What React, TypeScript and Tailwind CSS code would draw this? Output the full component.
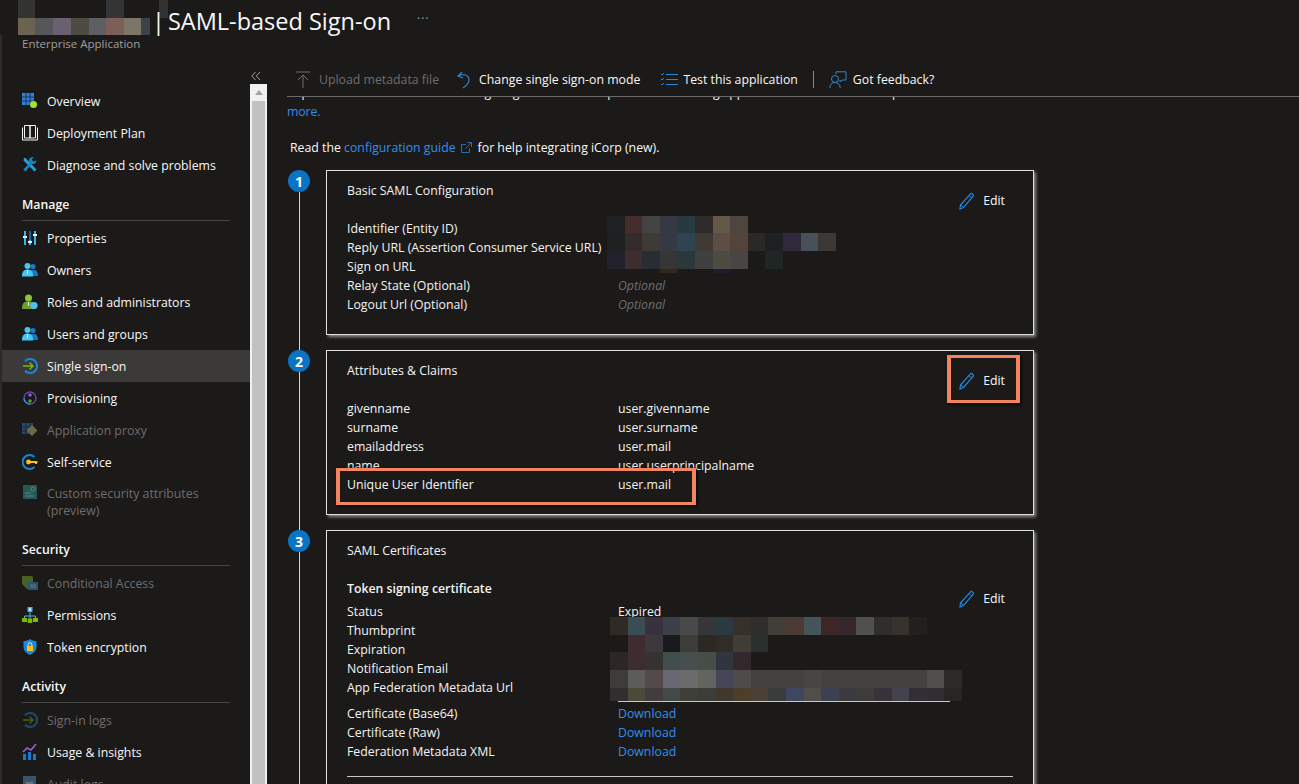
import type { ReactNode } from "react";

const dim = "opacity-45";

function Svg({ children, className }: { children: ReactNode; className?: string }) {
  return (
    <svg viewBox="0 0 16 16" className={"w-4 h-4 shrink-0 " + (className ?? "")}>
      {children}
    </svg>
  );
}

function GridIcon() {
  return (
    <Svg>
      <path d="M0 0h12v12H0z" fill="#2f80d8" />
      <path d="M4 0v12M8 0v12M0 4h12M0 8h12" stroke="#12263a" strokeWidth="0.8" />
      <circle cx="11.5" cy="11.5" r="3.5" fill="#a4e22e" />
    </Svg>
  );
}
function BookIcon() {
  return (
    <Svg>
      <path d="M.5 2.500v12.500h15V2.500" fill="none" stroke="#f4f4f4" />
      <path d="M2.500.5h5.500v12.500H2.500zM8 .5h5.500v12.500H8z" fill="#1b1a19" stroke="#f4f4f4" />
    </Svg>
  );
}
function WrenchIcon() {
  return (
    <Svg>
      <path d="M2 1l1.5 0 11 11.500-2 2L1.500 3.500z" fill="#2aa0d8" />
      <path d="M14.500 3.500a3.500 3.500 0 0 1-4.700 3.300L3.600 14.600 1.200 12.400l6.600-6.500A3.500 3.500 0 0 1 11.800.4L9.700 2.600l1.700 1.800z" fill="#1683c4" />
    </Svg>
  );
}
function SlidersIcon() {
  return (
    <Svg>
      <path d="M2 1h2v14H2zM7 1h2v14H7zM12 1h2v14h-2z" fill="#38b6ea" />
      <path d="M1 6h4v2H1zM6 11h4v2H6zM11 4h4v2h-4z" fill="#f2f2f2" />
      <path d="M7 1h2v9H7z" fill="#1c5f9c" />
    </Svg>
  );
}
function PeopleIcon() {
  return (
    <Svg>
      <circle cx="11" cy="4.500" r="2.600" fill="#1a78c8" />
      <path d="M7 14c0-5 1-6 4-6s5 1 5 6z" fill="#1a78c8" />
      <circle cx="5.500" cy="4" r="3" fill="#48c4ee" />
      <path d="M0 14.500c0-5 1.500-7 5.500-7s5.500 2 5.500 7z" fill="#48c4ee" />
      <path d="M5 8h1v4H5z" fill="#f2f2f2" />
    </Svg>
  );
}
function RoleIcon() {
  return (
    <Svg>
      <circle cx="6.500" cy="4" r="3.500" fill="#8cc63f" />
      <path d="M0 15c0-6 2-7.500 6.500-7.500S13 9 13 15z" fill="#6f9e2e" />
      <circle cx="12" cy="11.500" r="3.600" fill="#48c4ee" />
      <path d="M6 8h1v4H6z" fill="#f2f2f2" />
    </Svg>
  );
}
function SsoIcon({ className }: { className?: string }) {
  return (
    <Svg className={className}>
      <path d="M3 3.200A7 7 0 1 1 3 12.800" fill="none" stroke="#1783d4" strokeWidth="2.200" />
      <path d="M1 8h10M7.500 4.500 11 8l-3.500 3.500" fill="none" stroke="#7fba00" strokeWidth="1.400" />
    </Svg>
  );
}
function ProvisionIcon() {
  return (
    <Svg>
      <circle cx="8" cy="8" r="6" fill="none" stroke="#6a459e" strokeWidth="1.400" />
      <path d="M2 8a6 6 0 0 0 6 6" fill="none" stroke="#2a8fd8" strokeWidth="1.400" />
      <circle cx="8" cy="5" r="1.800" fill="#8a60c0" />
      <circle cx="8" cy="11" r="1.800" fill="#5aa02c" />
    </Svg>
  );
}
function ProxyIcon() {
  return (
    <Svg className={dim}>
      <path d="M0 1h11v11H0z" fill="#2f80d8" />
      <path d="M4 1v11M8 1v11M0 5h11M0 9h11" stroke="#12263a" strokeWidth="0.8" />
      <path d="M10 3l5.500 5.500-5.500 5.500-5.500-5.500z" fill="#c8d070" />
    </Svg>
  );
}
function KeyIcon() {
  return (
    <Svg>
      <path d="M12.500 3A7 7 0 1 0 12.500 13" fill="none" stroke="#1783d4" strokeWidth="2" />
      <circle cx="6.500" cy="8" r="2.400" fill="#f8c21c" />
      <path d="M8 7h7.500v2H15v1h-2V9H8z" fill="#f8c21c" />
    </Svg>
  );
}
function TagIcon() {
  return (
    <Svg className={dim}>
      <path d="M1 0h14v14H1z" fill="#2fa8a0" />
      <circle cx="11" cy="4" r="2" fill="none" stroke="#d8f2ef" />
      <path d="M3 8h6M3 11h9" stroke="#d8f2ef" />
    </Svg>
  );
}
function CondIcon() {
  return (
    <Svg className={dim}>
      <path d="M0 1h9l2 1v6l-3 5-3 1-5-5z" fill="#7fb82e" />
      <path d="M6 7h10v8H6z" fill="#3a9ad8" />
      <path d="M8 10h6M8 12h6" stroke="#cde6f7" />
    </Svg>
  );
}
function TreeIcon() {
  return (
    <Svg>
      <path d="M8 5v4M2.500 12V9h11v3M8 9v3" fill="none" stroke="#49b4e6" />
      <path d="M5.500 0h5v5h-5z" fill="#49b4e6" />
      <path d="M7 1.500h2v2H7z" fill="#f4f4f4" />
      <path d="M0 11h5v4H0zM5.800 11.500h4.400v4.500H5.800zM11 11h5v4h-5z" fill="#7fba00" />
    </Svg>
  );
}
function ShieldIcon() {
  return (
    <Svg>
      <path d="M8 0c2 1.400 4 2 6.500 2v6c0 3.600-3 6.500-6.500 8-3.500-1.500-6.500-4.400-6.500-8V2C4 2 6 1.400 8 0z" fill="#1e88e0" />
      <path d="M5 7h6v5H5z" fill="#f8c21c" />
      <path d="M6.200 7V5.500a1.800 1.800 0 0 1 3.600 0V7" fill="none" stroke="#f4e3a0" />
    </Svg>
  );
}
function ChartIcon() {
  return (
    <Svg>
      <path d="M1 10h3v6H1zM6 8h3v8H6zM11 10h3v6h-3z" fill="#1a78c8" />
      <path d="M1 8l4-4 4 2 5-6" fill="none" stroke="#9a5fd8" strokeWidth="1.600" />
    </Svg>
  );
}
function DocIcon() {
  return (
    <Svg className={dim}>
      <path d="M1 0h13v16H1z" fill="#5c9ccf" />
      <path d="M4 7h7" stroke="#f2f2f2" strokeWidth="1.600" />
    </Svg>
  );
}

type NavItem = { label: ReactNode; icon: ReactNode; muted?: boolean; active?: boolean; tall?: boolean };

const topItems: NavItem[] = [
  { label: "Overview", icon: <GridIcon /> },
  { label: "Deployment Plan", icon: <BookIcon /> },
  { label: "Diagnose and solve problems", icon: <WrenchIcon /> },
];
const manageItems: NavItem[] = [
  { label: "Properties", icon: <SlidersIcon /> },
  { label: "Owners", icon: <PeopleIcon /> },
  { label: "Roles and administrators", icon: <RoleIcon /> },
  { label: "Users and groups", icon: <PeopleIcon /> },
  { label: "Single sign-on", icon: <SsoIcon />, active: true },
  { label: "Provisioning", icon: <ProvisionIcon /> },
  { label: "Application proxy", icon: <ProxyIcon />, muted: true },
  { label: "Self-service", icon: <KeyIcon /> },
  { label: <>Custom security attributes<br />(preview)</>, icon: <TagIcon />, muted: true, tall: true },
];
const securityItems: NavItem[] = [
  { label: "Conditional Access", icon: <CondIcon />, muted: true },
  { label: "Permissions", icon: <TreeIcon /> },
  { label: "Token encryption", icon: <ShieldIcon /> },
];
const activityItems: NavItem[] = [
  { label: "Sign-in logs", icon: <SsoIcon className={dim} />, muted: true },
  { label: "Usage & insights", icon: <ChartIcon /> },
  { label: "Audit logs", icon: <DocIcon />, muted: true },
];

function NavRow({ item }: { item: NavItem }) {
  return (
    <div
      className={
        "flex shrink-0 gap-[9px] pl-5 " +
        (item.tall ? "h-[48px] items-start pt-[7px] leading-[17px] " : "h-8 items-center ") +
        (item.active ? "bg-[#3b3a39] " : "") +
        (item.muted ? "text-[#6e6d6c]" : "text-[#f8f8f8]")
      }
    >
      {item.icon}
      <span>{item.label}</span>
    </div>
  );
}

function NavSection({ title, items }: { title: string; items: NavItem[] }) {
  return (
    <div className="shrink-0">
      <div className="mx-5 h-[31px] border-b border-[#484644] pt-[5px] font-semibold leading-[19px] text-[#f8f8f8]">{title}</div>
      <div className="mt-[1px]">
        {items.map((item, i) => (
          <NavRow key={i} item={item} />
        ))}
      </div>
    </div>
  );
}

function Sidebar() {
  return (
    <aside className="flex w-[250px] shrink-0 flex-col overflow-hidden border-l-2 border-[#2b2b2d]">
      <div className="h-[50px] shrink-0 pl-5 text-[11.5px] leading-[18px] text-[#a19f9d]">Enterprise Application</div>
      {topItems.map((item, i) => (
        <NavRow key={i} item={item} />
      ))}
      <div className="mt-[9px] flex shrink-0 flex-col gap-[9px]">
        <NavSection title="Manage" items={manageItems} />
        <NavSection title="Security" items={securityItems} />
        <NavSection title="Activity" items={activityItems} />
      </div>
    </aside>
  );
}

function ScrollColumn() {
  return (
    <div className="flex w-[17px] shrink-0 flex-col">
      <div className="flex h-[49px] items-end justify-center pb-[3px]">
        <svg viewBox="0 0 10 10" className="mr-[5px] h-[10px] w-[10px]">
          <path d="M4.500 1 .8 5l3.700 4M9 1 5.300 5 9 9" fill="none" stroke="#a19f9d" />
        </svg>
      </div>
      <div className="flex flex-1 flex-col bg-[#f1f1f1] px-[2px]">
        <div className="flex h-[17px] items-center justify-center">
          <div className="h-0 w-0 border-x-[4px] border-b-[5px] border-x-transparent border-b-[#a3a3a3]" />
        </div>
        <div className="flex-1 bg-[#c1c1c1]" />
      </div>
    </div>
  );
}

function UploadIcon() {
  return (
    <svg viewBox="0 0 16 18" className="h-[18px] w-4">
      <path d="M1 1h14M8 4v13M3 9l5-5 5 5" fill="none" stroke="#706f6e" />
    </svg>
  );
}
function UndoIcon() {
  return (
    <svg viewBox="0 0 16 18" className="h-[18px] w-4">
      <path d="M6 1 2 5l5 2M2 5c5-3 11-1 11 4 0 3-3 6-6 8" fill="none" stroke="#2a86d8" strokeWidth="1.200" />
    </svg>
  );
}
function ListIcon() {
  return (
    <svg viewBox="0 0 18 16" className="h-4 w-[18px]">
      <path d="M6 2.500h12M6 7.500h12M6 12.500h12" stroke="#2a86d8" strokeWidth="1.200" />
      <path d="M1 2l1 1 2-2M1 7l1 1 2-2M1 12l1 1 2-2" fill="none" stroke="#2a86d8" />
    </svg>
  );
}
function FeedbackIcon() {
  return (
    <svg viewBox="0 0 18 18" className="h-[18px] w-[18px]">
      <path d="M7 3V.8h10V9h-4l-2 2V9" fill="none" stroke="#2a86d8" />
      <circle cx="6" cy="8" r="3.500" fill="none" stroke="#2a86d8" />
      <path d="M.8 17c0-3.500 2-5.500 5.200-5.500s5.200 2 5.200 5.500" fill="none" stroke="#2a86d8" />
    </svg>
  );
}
function PencilIcon() {
  return (
    <svg viewBox="0 0 16 18" className="h-[18px] w-4">
      <path d="M1.500 13 11.500 1.800c1-1 3.800 1.200 2.800 2.400L4.500 15.500l-3.500 1.500z" fill="none" stroke="#2a86d8" strokeWidth="1.200" />
      <path d="M10 3.500l3 2.500M1.800 13l2.500 2.200" stroke="#2a86d8" />
    </svg>
  );
}
function ExternalIcon() {
  return (
    <svg viewBox="0 0 11 11" className="ml-[5px] mr-[6px] inline-block h-[11px] w-[11px] align-[-1px]">
      <path d="M8.500 6v4.500h-8v-8H5M6 .5h4.500V5M10.500.5 4.500 6.500" fill="none" stroke="#1f6fb8" />
    </svg>
  );
}

function Toolbar() {
  return (
    <div className="relative z-10 ml-5 mt-[29px] flex h-[33px] shrink-0 items-center whitespace-nowrap border-b border-[#6b6a69] bg-[#1b1a19] pb-[1px] text-[#f8f8f8]">
      <div className="ml-2 flex items-center gap-2 text-[#6e6d6c]">
        <UploadIcon />
        <span>Upload metadata file</span>
      </div>
      <div className="ml-[17px] flex items-center gap-[7px]">
        <UndoIcon />
        <span>Change single sign-on mode</span>
      </div>
      <div className="ml-5 flex items-center gap-[5px]">
        <ListIcon />
        <span>Test this application</span>
      </div>
      <div className="ml-[15px] h-[17px] w-px bg-[#8a8988]" />
      <div className="ml-[15px] flex items-center gap-[6px]">
        <FeedbackIcon />
        <span>Got feedback?</span>
      </div>
    </div>
  );
}

function StepColumn({ n, last }: { n: number; last?: boolean }) {
  return (
    <div className={"flex w-6 shrink-0 flex-col items-center " + (last ? "h-[260px]" : "")}>
      <div className="flex h-[22px] w-[22px] shrink-0 items-center justify-center rounded-full bg-[#0a74c4] text-[14px] font-bold text-white">{n}</div>
      <div className="w-px flex-1 bg-[#d6d6d6]" />
    </div>
  );
}

function Edit() {
  return (
    <div className="flex items-center gap-[8px] text-[#f8f8f8]">
      <PencilIcon />
      <span>Edit</span>
    </div>
  );
}

function Rows({ rows }: { rows: [string, ReactNode][] }) {
  return (
    <div className="grid grid-cols-[271px_1fr] leading-[19px]">
      {rows.map(([k, v], i) => (
        <div key={i} className="contents">
          <div>{k}</div>
          <div>{v}</div>
        </div>
      ))}
    </div>
  );
}

function Mosaic({ rows, className }: { rows: { h: number; cells: string[] }[]; className: string }) {
  return (
    <div className={"absolute flex flex-col " + className}>
      {rows.map((r, i) => (
        <div key={i} className="flex">
          {r.cells.map((c, j) => (
            <div key={j} className="w-[17.6px]" style={{ height: r.h, backgroundColor: c }} />
          ))}
        </div>
      ))}
    </div>
  );
}

const mosaic1 = [
  { h: 17, cells: ["#1e2222", "#452c2d", "#444444", "#363844", "#273a42", "#2f2b29", "#645848", "#4e453e"] },
  { h: 18, cells: ["#1c2020", "#352a2c", "#403a36", "#363844", "#2f4450", "#3f3a34", "#5c4e44", "#54433a", "#2b2926", "#1e2022", "#2e2a3c", "#485058", "#3c3836"] },
  { h: 18, cells: ["#22202a", "#3e2d2f", "#262e34", "#363636", "#2a383c", "#404040", "#4c4c40", "#484644", "#1b1a19", "#202624"] },
  { h: 4, cells: ["#1b1a19", "#1b1a19", "#1b1a19", "#30281c", "#1b1a19", "#1b1a19", "#1e1c30"] },
];
const mosaic3 = [
  { h: 18, cells: ["#302a26", "#3a4c54", "#38323e", "#3c4048", "#484a4a", "#36363a", "#2a3a42", "#36302a", "#302e2a", "#403e38", "#4c3a34", "#445458", "#3e2626", "#36282a", "#50504c", "#302e2c", "#38322f", "#22201c"] },
  { h: 17, cells: ["#1c1a18", "#402c2e", "#3c383c", "#181a1e", "#3c3c38", "#2c2824", "#322c28", "#403c36", "#2a2e2c"] },
  { h: 18, cells: ["#2c2624", "#3c2e30", "#363230", "#424e4a", "#484e4e", "#464e48", "#32343e", "#32282e"] },
  { h: 18, cells: ["#3e3c3a", "#5c5c58", "#544a4a", "#686670", "#6c6c6c", "#626460", "#464658", "#4e4c48", "#444240", "#444240", "#444240", "#484644", "#444240", "#444240", "#444240", "#444240", "#444240", "#444240", "#504e4c", "#2c2a28"] },
  { h: 13, cells: ["#302e2e", "#4a4a38", "#423c3c", "#424a48", "#403e38", "#3c3c38", "#40382c", "#4c3e2c", "#4c4036", "#3a3c3c", "#3e4660", "#504e48", "#3c4050", "#3a3a40", "#3e3c3a", "#36343a", "#44424c", "#322e36", "#302e30", "#282624"] },
];

function Card({ title, height, children }: { title: string; height: string; children: ReactNode }) {
  return (
    <section className={"relative w-[708px] shrink-0 border border-[#dedede] px-5 pt-[10px] text-[#f4f4f4] shadow-[2px_2px_3px_#8c8c8c] " + height}>
      <h2 className="leading-[19px]">{title}</h2>
      {children}
    </section>
  );
}

const blue = "text-[#2f8ff0]";
const optional = <span className="italic text-[#6e6d6c]">Optional</span>;

function Steps() {
  return (
    <div className="mt-[13px] flex flex-col">
      <div className="flex gap-[15px]">
        <StepColumn n={1} />
        <div className="pb-[15px]">
          <Card title="Basic SAML Configuration" height="h-[165px]">
            <div className="mt-[19px]">
              <Rows
                rows={[
                  ["Identifier (Entity ID)", ""],
                  ["Reply URL (Assertion Consumer Service URL)", ""],
                  ["Sign on URL", ""],
                  ["Relay State (Optional)", optional],
                  ["Logout Url (Optional)", optional],
                ]}
              />
            </div>
            <div className="absolute right-[28px] top-[20px]">
              <Edit />
            </div>
            <Mosaic rows={mosaic1} className="left-[280px] top-[45px]" />
          </Card>
        </div>
      </div>
      <div className="flex gap-[15px]">
        <StepColumn n={2} />
        <div className="pb-[15px]">
          <Card title="Attributes & Claims" height="h-[165px]">
            <div className="mt-[19px]">
              <Rows
                rows={[
                  ["givenname", "user.givenname"],
                  ["surname", "user.surname"],
                  ["emailaddress", "user.mail"],
                  ["name", "user.userprincipalname"],
                  ["Unique User Identifier", "user.mail"],
                ]}
              />
            </div>
            <div className="absolute right-[28px] top-[20px]">
              <Edit />
            </div>
            <div className="absolute left-[620px] top-[4px] h-[48px] w-[73px] border-x-4 border-y-[3px] border-[#f4845f] shadow-[1px_1px_3px_#000]" />
            <div className="absolute left-[9px] top-[117px] h-[37px] w-[360px] border-x-4 border-y-[3px] border-[#f4845f] shadow-[1px_1px_3px_#000]" />
          </Card>
        </div>
      </div>
      <div className="flex gap-[15px]">
        <StepColumn n={3} last />
        <Card title="SAML Certificates" height="h-[300px]">
          <div className="mt-[19px] font-semibold leading-[19px]">Token signing certificate</div>
          <div className="mt-[4px]">
            <Rows
              rows={[
                ["Status", "Expired"],
                ["Thumbprint", ""],
                ["Expiration", ""],
                ["Notification Email", ""],
                ["App Federation Metadata Url", ""],
              ]}
            />
          </div>
          <div className="mt-[7px]">
            <Rows
              rows={[
                ["Certificate (Base64)", <span className={blue}>Download</span>],
                ["Certificate (Raw)", <span className={blue}>Download</span>],
                ["Federation Metadata XML", <span className={blue}>Download</span>],
              ]}
            />
          </div>
          <div className="mt-[15px] h-px w-[666px] bg-[#c8c8c8]" />
          <div className="absolute right-[28px] top-[58px]">
            <Edit />
          </div>
          <Mosaic rows={mosaic3} className="left-[283px] top-[86px]" />
          <div className="absolute left-[291px] top-[170px] h-px w-[332px] bg-[#c8c8c8]" />
        </Card>
      </div>
    </div>
  );
}

function Header() {
  return (
    <header className="flex h-[35px] shrink-0 items-start pl-[18px]">
      <div className="flex h-[35px] w-[132px] flex-col">
        <div className="grid h-[18px] w-[132px] grid-cols-[17px_71px_18px_35px_9px]">
          <div className="bg-[#333332]" />
          <div />
          <div className="bg-[#323436]" />
          <div />
          <div className="bg-[#313233]" />
        </div>
        <div className="grid h-[17px] grid-cols-[17px_18px_18px_18px_17px_18px_17px_9px]">
          <div className="bg-[#6a6350]" />
          <div className="bg-[#54585a]" />
          <div className="bg-[#6b6070]" />
          <div className="bg-[#4e4c42]" />
          <div className="bg-[#5e5f63]" />
          <div className="bg-[#7a6058]" />
          <div className="bg-[#7c7568]" />
          <div className="bg-[#39434a]" />
        </div>
      </div>
      <h1 className="ml-[2px] mt-[5px] flex text-[23.500px] leading-[32px] text-[#f8f8f8]">
        <span>|</span>
        <span className="ml-[3px]">SAML-based Sign-on</span>
      </h1>
      <span className="ml-[26px] mt-[9px] text-[12px] tracking-[1px] text-[#a19f9d]">···</span>
    </header>
  );
}

export default function App() {
  return (
    <div className="flex h-[784px] w-[1299px] flex-col overflow-hidden bg-[#1b1a19] font-['Open_Sans',sans-serif] text-[12.300px] leading-[19px] text-[#f8f8f8]">
      <Header />
      <div className="flex min-h-0 flex-1">
        <Sidebar />
        <ScrollColumn />
        <main className="flex min-w-0 flex-1 flex-col">
          <Toolbar />
          <div className="min-h-0 flex-1 overflow-hidden pl-5">
            <p className="-mt-[14px] whitespace-nowrap tracking-[-0.1px]">
              Implement. Choose a federated single sign-on whenever possible for existing applications that do not use OpenID Connect or OAuth. <span className={blue}>Learn</span>
              <br />
              <span className={blue}>more.</span>
            </p>
            <p className="ml-[3px] mt-[17px]">
              Read the <span className={blue}>configuration guide</span>
              <ExternalIcon />
              for help integrating iCorp (new).
            </p>
            <Steps />
          </div>
        </main>
      </div>
    </div>
  );
}
